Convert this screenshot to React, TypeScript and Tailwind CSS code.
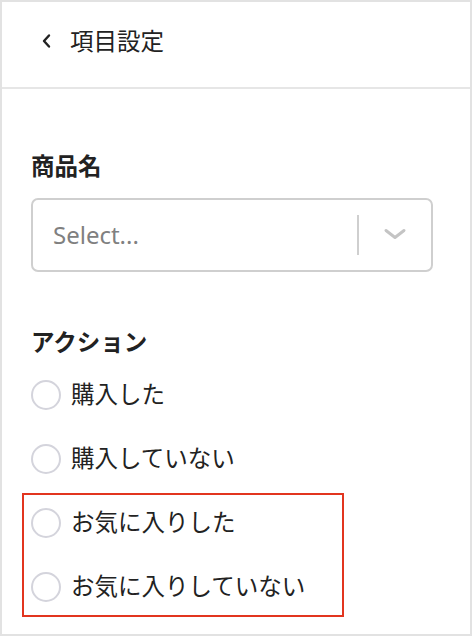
import React from 'react';

const options = ['購入した', '購入していない'];
const favOptions = ['お気に入りした', 'お気に入りしていない'];

const Radio: React.FC<{ label: string; tall?: boolean }> = ({ label, tall = true }) => (
  <label className={`flex items-center gap-[10px] ${tall ? 'h-[64px]' : 'h-[56px]'}`}>
    <span className="w-[30px] h-[30px] rounded-full border-2 border-[#d4d4dc] bg-white shrink-0" />
    <span className="text-[23.5px] text-[#222]">{label}</span>
  </label>
);

const App: React.FC = () => {
  return (
    <div
      className="w-[472px] h-[640px] bg-white"
      style={{ fontFamily: '"Noto Sans", "Noto Sans CJK JP", sans-serif' }}
    >
      <div className="w-full h-[636px] border-2 border-[#e2e2e2] flex flex-col">
        <div className="h-[87px] border-b-2 border-[#e6e6e6] flex items-center pl-[38px] gap-[16px] pb-[8px]">
          <svg className="w-[14px] h-[16px] text-[#222]" viewBox="0 0 14 16" fill="none" stroke="currentColor" strokeWidth={2.4} strokeLinecap="round" strokeLinejoin="round">
            <path d="M9 2.5L4 8l5 5.5" />
          </svg>
          <h1 className="text-[23.5px] text-[#222] leading-[32px]">項目設定</h1>
        </div>

        <div className="pl-[29px] pt-[61px]">
          <h2 className="text-[23.5px] font-bold text-[#222] leading-[32px]">商品名</h2>
          <div className="mt-[16px] w-[402px] h-[74px] border-2 border-[#cfcfcf] rounded-[7px] flex items-center">
            <span className="flex-1 pl-[20px] text-[24px] text-[#808080]">Select...</span>
            <span className="w-[2px] h-[40px] bg-[#cfcfcf]" />
            <div className="w-[72px] flex items-center justify-center">
              <svg className="w-[24px] h-[24px] text-[#c4c4c4]" viewBox="0 0 24 24" fill="none" stroke="currentColor" strokeWidth={3} strokeLinecap="round" strokeLinejoin="round">
                <path d="M3 7.5l9 7 9-7" />
              </svg>
            </div>
          </div>

          <h2 className="mt-[54px] text-[23.5px] font-bold text-[#222] leading-[32px]">アクション</h2>
          <div className="mt-[5px] flex flex-col">
            {options.map((o) => (
              <Radio key={o} label={o} />
            ))}
            <div className="mt-[2px] -ml-[9px] w-[322px] border-2 border-[#e2351f] pl-[7px] flex flex-col gap-[8px]">
              {favOptions.map((o) => (
                <Radio key={o} label={o} tall={false} />
              ))}
            </div>
          </div>
        </div>
      </div>
    </div>
  );
};

export default App;
